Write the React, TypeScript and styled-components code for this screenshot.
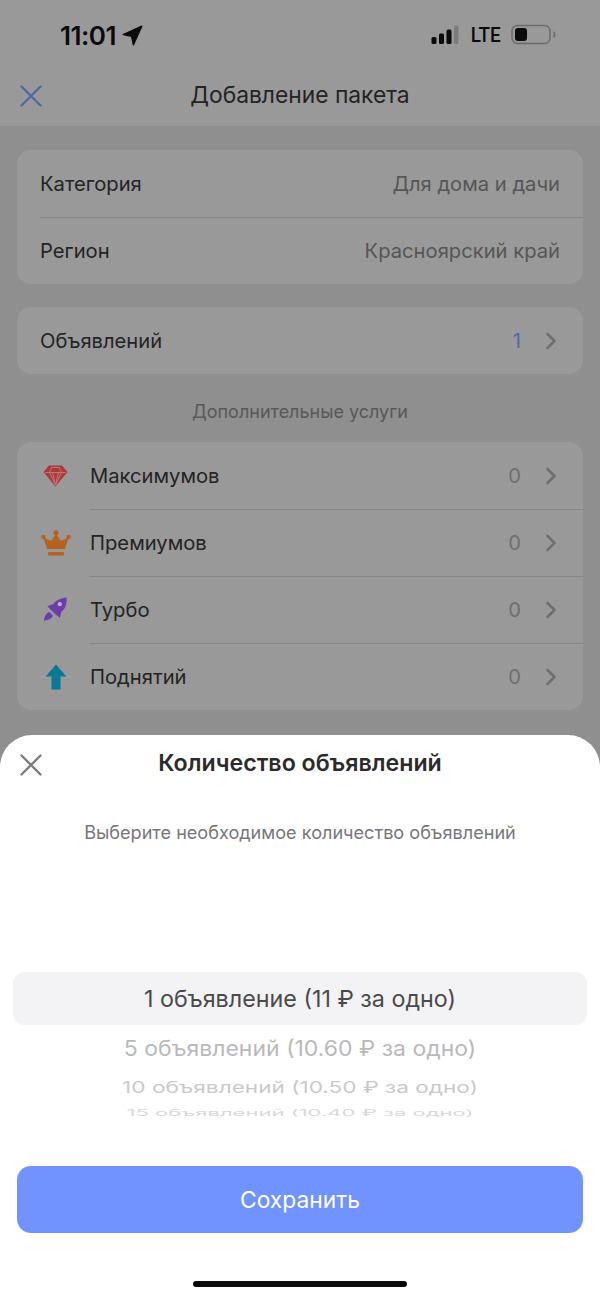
import React from 'react';
import styled, { createGlobalStyle } from 'styled-components';

const GlobalStyle = createGlobalStyle`
  html, body {
    margin: 0;
    padding: 0;
    background: #8f8f8f;
  }
  * {
    box-sizing: border-box;
  }
`;

const CloseIcon = ({ color }: { color: string }) => (
  <svg width='24' height='24' viewBox='0 0 24 24' fill='none'>
    <path d='M2.5 2.5 L21.5 21.5 M21.5 2.5 L2.5 21.5' stroke={color} strokeWidth='2.4' strokeLinecap='round' />
  </svg>
);

const Chevron = () => (
  <ChevronSlot>
    <svg width='12' height='18' viewBox='0 0 12 18' fill='none'>
      <path d='M2.5 2 L9.5 9 L2.5 16' stroke='#6f6f6f' strokeWidth='2.6' strokeLinecap='round' strokeLinejoin='round' />
    </svg>
  </ChevronSlot>
);

const Gem = () => (
  <svg width='25' height='22' viewBox='0 0 25 22'>
    <path d='M6 0.5 H19 L24.5 7 L12.5 21.5 L0.5 7 Z' fill='#ab3a3e' />
    <path d='M2 7.5 H23 M6.5 7.5 L12.5 20 L18.5 7.5 M9.5 7.5 L12.5 20 M15.5 7.5 L12.5 20 M6.5 7.5 L9 2 M18.5 7.5 L16 2 M9 2.5 H16' stroke='#c57a7c' strokeWidth='0.9' fill='none' />
  </svg>
);

const Crown = () => (
  <svg width='30' height='26' viewBox='0 0 30 26'>
    <circle cx='15' cy='2.8' r='2.6' fill='#b5621f' />
    <circle cx='2.4' cy='7' r='2.2' fill='#b5621f' />
    <circle cx='27.6' cy='7' r='2.2' fill='#b5621f' />
    <path d='M15 4 L20 11 L27.5 7.5 L24 19 H6 L2.5 7.5 L10 11 Z' fill='#b5621f' />
    <rect x='7' y='22' width='16' height='3.4' rx='1.2' fill='#b5621f' />
  </svg>
);

const Rocket = () => (
  <svg width='25' height='25' viewBox='0 0 26 26'>
    <path d='M24.5 0.5 C25 7 23.5 12 19 15.5 L17.5 21.5 L13.5 18.5 L7.5 12.5 L4.5 9.5 L10.5 7.5 C14 3 19 1 24.5 0.5 Z' fill='#6a3dab' />
    <circle cx='17.5' cy='7.5' r='2.2' fill='#c4a9e0' />
    <path d='M6.5 15.5 C3.5 16.5 1.5 20 0.8 24.8 C5.5 24.2 9 22.5 10.5 19.5 Z' fill='#6a3dab' />
  </svg>
);

const ArrowUp = () => (
  <svg width='22' height='26' viewBox='0 0 22 26'>
    <path d='M11 0.5 L21.5 12.5 H15.5 V25.5 H6.5 V12.5 H0.5 Z' fill='#0b7896' />
  </svg>
);

const Arrow = () => (
  <svg width='21' height='21' viewBox='0 0 20 20'>
    <path d='M18.8 1.2 L10.9 18.8 L9.2 10.8 L1.2 9.1 Z' fill='#0b0b0b' stroke='#0b0b0b' strokeWidth='1.4' strokeLinejoin='round' />
  </svg>
);

const Signal = () => (
  <svg width='30' height='20' viewBox='0 0 28 20'>
    <rect x='0.5' y='12' width='5' height='7' rx='1.5' fill='#0b0b0b' />
    <rect x='8' y='8.5' width='5' height='10.5' rx='1.5' fill='#0b0b0b' />
    <rect x='15.5' y='4.5' width='5' height='14.5' rx='1.5' fill='#0b0b0b' />
    <rect x='23' y='0.5' width='4.5' height='18.5' rx='1.5' fill='#7c7c7c' />
  </svg>
);

const Battery = () => (
  <svg width='46' height='22' viewBox='0 0 46 22' fill='none'>
    <rect x='1' y='1.5' width='38' height='18' rx='5.5' stroke='#6a6a6a' strokeWidth='1.4' />
    <rect x='4' y='4' width='12' height='13' rx='3' fill='#0b0b0b' />
    <path d='M42.5 8 C44 9 44 12 42.5 13' stroke='#6a6a6a' strokeWidth='1.6' />
  </svg>
);

const wheelItems = [
  { label: '1 объявление (11 ₽ за одно)', color: '#4a4a4c', height: 53, size: 23.3, squash: 1 },
  { label: '5 объявлений (10.60 ₽ за одно)', color: '#b9b9bb', height: 46, size: 23, squash: 0.94 },
  { label: '10 объявлений (10.50 ₽ за одно)', color: '#c9c9cb', height: 31, size: 22.6, squash: 0.72 },
  { label: '15 объявлений (10.40 ₽ за одно)', color: '#d8d8da', height: 21, size: 22, squash: 0.38 },
];

export default function App() {
  return (
    <Page>
      <GlobalStyle />
      <StatusBar>
        <Clock>
          11:01
          <Arrow />
        </Clock>
        <StatusIcons>
          <Signal />
          <Lte>LTE</Lte>
          <Battery />
        </StatusIcons>
      </StatusBar>
      <NavBar>
        <NavClose>
          <CloseIcon color='#4f69a8' />
        </NavClose>
        Добавление пакета
      </NavBar>
      <Content>
        <Card>
          <Row>
            <RowLabel>Категория</RowLabel>
            <RowValue>Для дома и дачи</RowValue>
          </Row>
          <Row $divider>
            <RowLabel>Регион</RowLabel>
            <RowValue>Красноярский край</RowValue>
          </Row>
        </Card>
        <Card>
          <Row>
            <RowLabel>Объявлений</RowLabel>
            <RowCount $accent>1</RowCount>
            <Chevron />
          </Row>
        </Card>
        <SectionTitle>Дополнительные услуги</SectionTitle>
        <Card>
          <ServiceRow icon={<Gem />} label='Максимумов' />
          <ServiceRow icon={<Crown />} label='Премиумов' divider />
          <ServiceRow icon={<Rocket />} label='Турбо' divider />
          <ServiceRow icon={<ArrowUp />} label='Поднятий' divider />
        </Card>
      </Content>

      <Sheet>
        <SheetHeader>
          <SheetClose>
            <CloseIcon color='#7d7d7d' />
          </SheetClose>
          <SheetTitle>Количество объявлений</SheetTitle>
        </SheetHeader>
        <SheetHint>Выберите необходимое количество объявлений</SheetHint>
        <Wheel>
          {wheelItems.map((item, index) => (
            <WheelItem key={item.label} $selected={index === 0} $height={item.height}>
              <WheelText $color={item.color} $size={item.size} $squash={item.squash}>
                {item.label}
              </WheelText>
            </WheelItem>
          ))}
        </Wheel>
        <SaveButton>Сохранить</SaveButton>
        <HomeIndicator />
      </Sheet>
    </Page>
  );
}

function ServiceRow({ icon, label, divider }: { icon: React.ReactNode; label: string; divider?: boolean }) {
  return (
    <Row $divider={divider} $inset>
      <IconSlot>{icon}</IconSlot>
      <RowLabel>{label}</RowLabel>
      <RowCount>0</RowCount>
      <Chevron />
    </Row>
  );
}

const Page = styled.div`
  position: relative;
  width: 600px;
  height: 1297px;
  overflow: hidden;
  background: #8f8f8f;
  font-family: Inter, 'Liberation Sans', sans-serif;
  color: #242424;
`;

const StatusBar = styled.div`
  height: 70px;
  padding: 0 43px 0 60px;
  display: flex;
  align-items: center;
  justify-content: space-between;
  background: #999999;
`;

const Clock = styled.div`
  display: flex;
  align-items: center;
  gap: 6px;
  font-size: 26px;
  font-weight: 600;
  letter-spacing: -0.5px;
  color: #0b0b0b;
`;

const StatusIcons = styled.div`
  display: flex;
  align-items: center;
  gap: 9px;
`;

const Lte = styled.span`
  font-family: Roboto, sans-serif;
  font-size: 21px;
  font-weight: 500;
  color: #0b0b0b;
  transform: scaleX(0.9);
`;

const NavBar = styled.div`
  position: relative;
  height: 57px;
  display: flex;
  align-items: center;
  justify-content: center;
  padding-bottom: 7px;
  font-size: 22.8px;
  color: #242424;
  background: #999999;
  border-bottom: 1px solid #8c8c8c;
`;

const NavClose = styled.span`
  position: absolute;
  left: 19px;
  top: 14px;
  display: flex;
`;

const Content = styled.div`
  padding: 23px 17px 0;
  display: flex;
  flex-direction: column;
`;

const Card = styled.div`
  background: #999999;
  border-radius: 14px;
  margin-bottom: 23px;
  &:nth-of-type(2) {
    margin-bottom: 0;
  }
`;

const Row = styled.div<{ $divider?: boolean; $inset?: boolean }>`
  position: relative;
  height: 67px;
  padding: 0 23px 0 ${(p) => (p.$inset ? '0' : '23px')};
  display: flex;
  align-items: center;
  font-size: 20.2px;

  ${(p) =>
    p.$divider &&
    `&::before {
      content: '';
      position: absolute;
      top: 0;
      right: 0;
      left: ${p.$inset ? '73px' : '23px'};
      height: 1px;
      background: #878787;
    }`}
`;

const RowLabel = styled.span`
  flex: 1;
  color: #242424;
`;

const RowValue = styled.span`
  color: #565656;
`;

const RowCount = styled.span<{ $accent?: boolean }>`
  margin-right: 24px;
  color: ${(p) => (p.$accent ? '#4f69a8' : '#6f6f6f')};
`;

const ChevronSlot = styled.span`
  display: flex;
  margin-right: 3px;
`;

const IconSlot = styled.span`
  width: 73px;
  padding: 0 4px 0 8px;
  display: flex;
  align-items: center;
  justify-content: center;
`;

const SectionTitle = styled.div`
  height: 68px;
  padding-top: 6px;
  display: flex;
  align-items: center;
  justify-content: center;
  font-size: 18px;
  color: #585858;
`;

const Sheet = styled.div`
  position: absolute;
  left: 0;
  right: 0;
  bottom: 0;
  height: 562px;
  background: #ffffff;
  border-radius: 32px 32px 0 0;
  display: flex;
  flex-direction: column;
  align-items: center;
`;

const SheetHeader = styled.div`
  position: relative;
  width: 100%;
  height: 56px;
  display: flex;
  align-items: center;
  justify-content: center;
`;

const SheetClose = styled.span`
  position: absolute;
  left: 19px;
  top: 18px;
  display: flex;
`;

const SheetTitle = styled.h2`
  margin: 0;
  font-size: 23.2px;
  font-weight: 600;
  color: #2b2b2d;
`;

const SheetHint = styled.p`
  margin: 29px 0 0;
  font-size: 18.1px;
  line-height: 24px;
  color: #77777b;
`;

const Wheel = styled.div`
  margin-top: 128px;
  width: 100%;
  padding: 0 13px;
  display: flex;
  flex-direction: column;
  align-items: stretch;
`;

const WheelItem = styled.div<{ $selected: boolean; $height: number }>`
  height: ${(p) => p.$height}px;
  display: flex;
  align-items: center;
  justify-content: center;
  overflow: hidden;
  border-radius: 12px;
  background: ${(p) => (p.$selected ? '#f3f3f5' : 'transparent')};
`;

const WheelText = styled.span<{ $color: string; $size: number; $squash: number }>`
  font-size: ${(p) => p.$size}px;
  color: ${(p) => p.$color};
  white-space: nowrap;
  transform: scaleY(${(p) => p.$squash});
`;

const SaveButton = styled.button`
  margin-top: 43px;
  width: 566px;
  height: 67px;
  border: 0;
  border-radius: 14px;
  background: #7093ff;
  color: #ffffff;
  font-family: inherit;
  font-size: 22.8px;
`;

const HomeIndicator = styled.div`
  margin-top: 48px;
  width: 214px;
  height: 6px;
  border-radius: 3px;
  background: #0b0b0b;
`;
